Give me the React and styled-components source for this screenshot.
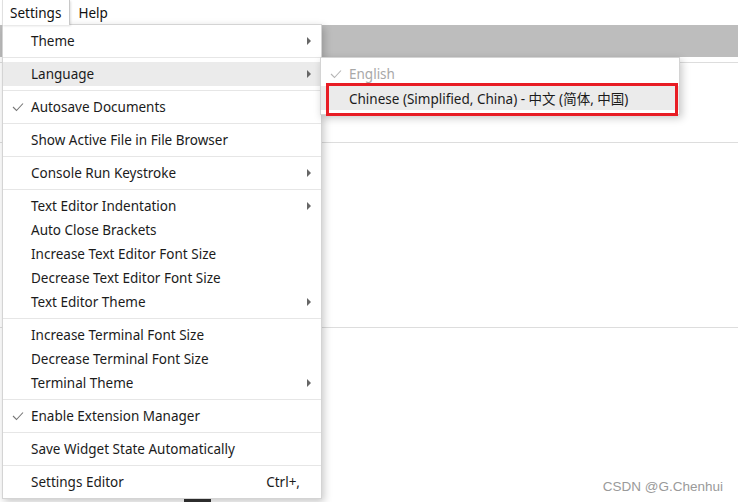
import React from "react";
import styled, { createGlobalStyle } from "styled-components";

const GlobalStyle = createGlobalStyle`
  html, body {
    margin: 0;
    padding: 0;
    background: #ffffff;
  }
  body {
    font-family: "Noto Sans", "Noto Sans CJK SC", sans-serif;
    color: #1b1b1b;
  }
`;

const Screen = styled.div`
  position: relative;
  width: 738px;
  height: 502px;
  overflow: hidden;
  background: #ffffff;
`;

const MenuBar = styled.div`
  display: flex;
  height: 25px;
  padding-left: 2px;
  background: #ffffff;
`;

const BarItem = styled.div`
  display: flex;
  align-items: center;
  padding: 0 8px 0 7px;
  font-size: 13.5px;
  color: #111;
  background: #ffffff;
  border-right: 1px solid ${(p) => (p.$open ? "#c8c8c8" : "transparent")};
  border-left: 1px solid ${(p) => (p.$open ? "#e0e0e0" : "transparent")};
  box-shadow: ${(p) => (p.$open ? "1px 1px 2px rgba(0,0,0,0.12)" : "none")};
  z-index: ${(p) => (p.$open ? 3 : 0)};
`;

const Toolbar = styled.div`
  height: 32px;
  background: #bdbdbd;
`;

const Panel = styled.div`
  height: ${(p) => p.$h}px;
  border-bottom: 1px solid #dddddd;
`;

const StatusMark = styled.div`
  position: absolute;
  left: 184px;
  bottom: 0;
  width: 27px;
  height: 3px;
  background: #333;
`;

const Watermark = styled.div`
  position: absolute;
  right: 15px;
  bottom: 8px;
  font-family: "Liberation Sans", Arial, sans-serif;
  font-size: 13.5px;
  color: #9a9a9a;
`;

const Menu = styled.div`
  position: absolute;
  left: ${(p) => p.$left}px;
  top: ${(p) => p.$top}px;
  width: ${(p) => p.$width}px;
  display: flex;
  flex-direction: column;
  padding: 4px 0;
  background: #ffffff;
  border: 1px solid #d4d4d4;
  box-shadow: 2px 3px 8px rgba(0, 0, 0, 0.22);
  box-sizing: border-box;
  z-index: ${(p) => p.$z};
`;

const Item = styled.div`
  position: relative;
  display: flex;
  align-items: center;
  height: 24px;
  padding: 0 12px 0 28px;
  font-size: 13.5px;
  color: ${(p) => (p.$disabled ? "#a8a8a8" : "#1b1b1b")};
  background: ${(p) => (p.$active ? "#ebebeb" : "transparent")};
`;

const Label = styled.span`
  flex: 1;
  white-space: nowrap;
`;

const Shortcut = styled.span`
  margin-right: 9px;
  white-space: nowrap;
`;

const Check = styled.svg`
  position: absolute;
  left: 9px;
  top: 7px;
  width: 12px;
  height: 10px;
`;

const Arrow = styled.span`
  width: 0;
  height: 0;
  margin-right: -2px;
  border-top: 4px solid transparent;
  border-bottom: 4px solid transparent;
  border-left: 4px solid #666;
`;

const Separator = styled.div`
  height: 1px;
  margin: 4px 0;
  background: #e6e6e6;
`;

const Highlight = styled.div`
  position: absolute;
  left: 326px;
  top: 83px;
  width: 352px;
  height: 33px;
  border: 3px solid #e81c24;
  box-sizing: border-box;
  z-index: 5;
`;

const CheckMark = ({ color = "#777" }) => (
  <Check viewBox="0 0 12 10">
    <polyline
      points="1,5 4.5,8.5 11,1.5"
      fill="none"
      stroke={color}
      strokeWidth="1.1"
    />
  </Check>
);

const MenuItem = ({ label, checked, sub, shortcut, active, disabled }) => (
  <Item $active={active} $disabled={disabled}>
    {checked && <CheckMark color={disabled ? "#b5b5b5" : "#777"} />}
    <Label>{label}</Label>
    {shortcut && <Shortcut>{shortcut}</Shortcut>}
    {sub && <Arrow />}
  </Item>
);

const groups = [
  [{ label: "Theme", sub: true }],
  [{ label: "Language", sub: true, active: true }],
  [{ label: "Autosave Documents", checked: true }],
  [{ label: "Show Active File in File Browser" }],
  [{ label: "Console Run Keystroke", sub: true }],
  [
    { label: "Text Editor Indentation", sub: true },
    { label: "Auto Close Brackets" },
    { label: "Increase Text Editor Font Size" },
    { label: "Decrease Text Editor Font Size" },
    { label: "Text Editor Theme", sub: true },
  ],
  [
    { label: "Increase Terminal Font Size" },
    { label: "Decrease Terminal Font Size" },
    { label: "Terminal Theme", sub: true },
  ],
  [{ label: "Enable Extension Manager", checked: true }],
  [{ label: "Save Widget State Automatically" }],
  [{ label: "Settings Editor", shortcut: "Ctrl+," }],
];

export default function App() {
  return (
    <Screen>
      <GlobalStyle />
      <MenuBar>
        <BarItem $open>Settings</BarItem>
        <BarItem>Help</BarItem>
      </MenuBar>
      <Toolbar />
      <Panel $h={5} />
      <Panel $h={79} />
      <Panel $h={184} />

      <Menu $left={2} $top={24} $width={320} $z={2}>
        {groups.map((group, gi) => (
          <React.Fragment key={gi}>
            {gi > 0 && <Separator />}
            {group.map((it) => (
              <MenuItem key={it.label} {...it} />
            ))}
          </React.Fragment>
        ))}
      </Menu>

      <Menu $left={320} $top={57} $width={360} $z={4}>
        <MenuItem label="English" checked disabled />
        <MenuItem label="Chinese (Simplified, China) - 中文 (简体, 中国)" active />
      </Menu>
      <Highlight />

      <StatusMark />
      <Watermark>CSDN @G.Chenhui</Watermark>
    </Screen>
  );
}
